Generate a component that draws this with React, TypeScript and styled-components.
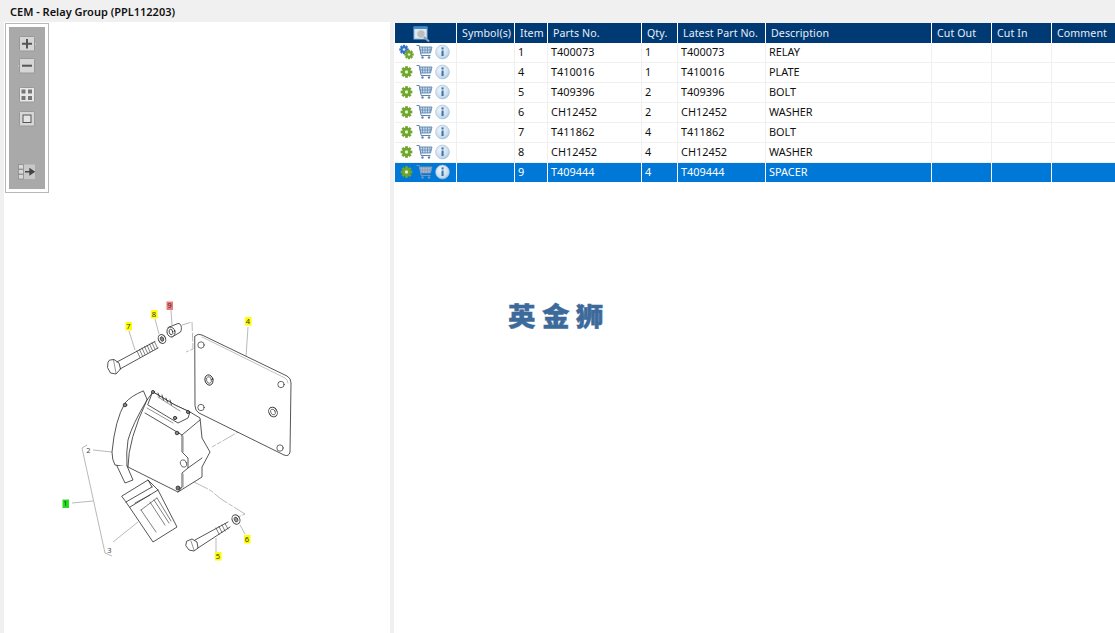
import React from "react";
import styled, { createGlobalStyle } from "styled-components";

const Global = createGlobalStyle`
  html, body { margin: 0; padding: 0; background: #fff; overflow: hidden; }
  #root { width: 1115px; height: 633px; }
`;

const Page = styled.div`
  width: 1115px;
  height: 633px;
  display: flex;
  flex-direction: column;
  background: #f0f0f0;
  font-family: "Noto Sans", "Open Sans", sans-serif;
  overflow: hidden;
`;
const TitleBar = styled.div`
  height: 22px;
  flex: none;
  padding-left: 10px;
  display: flex;
  align-items: center;
  font-size: 11px;
  font-weight: 600;
  color: #111;
`;
const Body = styled.div`
  flex: 1;
  display: flex;
  padding-left: 4px;
  gap: 4px;
  min-height: 0;
`;
const DiagramPane = styled.div`
  position: relative;
  width: 386px;
  flex: none;
  background: #fff;
`;
const Drawing = styled.svg`
  display: block;
  width: 386px;
  height: 611px;
`;
const Toolbar = styled.div`
  position: absolute;
  left: 1px;
  top: 1px;
  width: 44px;
  height: 170px;
  box-sizing: border-box;
  border: 1px solid #b8b8b8;
  padding: 3px;
  background: #fff;
`;
const ToolbarInner = styled.div`
  height: 100%;
  background: #a9a9a9;
  display: flex;
  flex-direction: column;
  align-items: center;
  padding-top: 9px;
  box-sizing: border-box;
`;
const ToolIcon = styled.svg<{ $top: number }>`
  display: block;
  width: 20px;
  height: 16px;
  margin-top: ${(p) => p.$top}px;
`;
const TablePane = styled.div`
  flex: 1;
  min-width: 0;
  background: #fff;
  margin-top: 1px;
  padding-left: 1px;
  display: flex;
  flex-direction: column;
`;
const Table = styled.table`
  width: 720px;
  table-layout: fixed;
  border-collapse: separate;
  border-spacing: 0;
  font-size: 10.9px;
`;
const Column = styled.col<{ $w: number }>`
  width: ${(p) => p.$w}px;
`;
const HeadCell = styled.th`
  height: 20px;
  padding: 0 0 0 5px;
  box-sizing: border-box;
  background: #003a75;
  color: #e8eef5;
  font-size: 10.6px;
  line-height: 14px;
  font-weight: 400;
  text-align: left;
  letter-spacing: 0.1px;
  border-right: 1px solid #fff;
  white-space: nowrap;
  overflow: hidden;
  vertical-align: middle;
  &:last-child { border-right: 0; }
`;
const Row = styled.tr<{ $selected?: boolean }>`
  background: ${(p) => (p.$selected ? "#0078d7" : "#fff")};
  color: ${(p) => (p.$selected ? "#fff" : "#111")};
`;
const Cell = styled.td<{ $selected?: boolean }>`
  height: 20px;
  padding: 0 0 2px 3px;
  box-sizing: border-box;
  line-height: 14px;
  border-right: 1px solid ${(p) => (p.$selected ? "#fff" : "#f0f0f0")};
  border-bottom: 1px solid ${(p) => (p.$selected ? "#fff" : "#f0f0f0")};
  white-space: nowrap;
  overflow: hidden;
  vertical-align: middle;
  &:last-child { border-right: 0; }
`;
const IconGroup = styled.div`
  display: flex;
  align-items: center;
  gap: 2px;
  padding-left: 1px;
  height: 16px;
  margin-bottom: -1px;
`;
const ViewSvg = styled.svg`
  display: block;
  margin: 1px 0 -2px 13px;
`;
const Watermark = styled.div`
  margin: 117px 0 0 113px;
  font-family: "Noto Sans CJK SC", sans-serif;
  font-weight: 900;
  font-size: 26px;
  line-height: 30px;
  letter-spacing: 6px;
  color: #3c6a9b;
  transform: scaleX(1.06);
  transform-origin: left center;
  -webkit-text-stroke: 0.4px #3c6a9b;
`;

function Gear({ x = 0, y = 0, r = 5, color = "#6fa52c" }: { x?: number; y?: number; r?: number; color?: string }) {
  const teeth = [0, 45, 90, 135, 180, 225, 270, 315];
  return (
    <g transform={`translate(${x} ${y})`}>
      {teeth.map((a) => (
        <rect key={a} x={-r * 0.27} y={-r * 1.12} width={r * 0.54} height={r * 0.6} fill={color} transform={`rotate(${a})`} />
      ))}
      <circle r={r * 0.78} fill={color} />
      <circle r={r * 0.32} fill="#e3efd0" />
    </g>
  );
}

function GearIcon({ multi }: { multi?: boolean }) {
  return (
    <svg width="15" height="16" viewBox="0 0 15 16">
      {multi ? (
        <>
          <Gear x={5} y={5.5} r={4.2} color="#2f6fd0" />
          <Gear x={10} y={10.5} r={4.2} color="#6fa52c" />
        </>
      ) : (
        <Gear x={7.5} y={8} r={5.2} />
      )}
    </svg>
  );
}

function CartIcon({ selected }: { selected?: boolean }) {
  const c = selected ? "#7d95b5" : "#5f86b0";
  return (
    <svg width="17" height="16" viewBox="0 0 17 16" fill="none">
      <path d="M0.5 1.5H3.2L5.2 11.5H14.5" stroke={c} strokeWidth="1" />
      <path d="M3.6 3H16L14.5 9H4.8Z" fill={selected ? "#a9bcd3" : "#c3d5e8"} stroke={c} strokeWidth="0.9" />
      <path d="M6.5 3V9M9 3V9M11.5 3V9M14 3V9M4.2 6H15.2" stroke={c} strokeWidth="0.7" />
      <circle cx="6.5" cy="13.5" r="1.2" fill={c} />
      <circle cx="13" cy="13.5" r="1.2" fill={c} />
    </svg>
  );
}

function InfoIcon() {
  return (
    <svg width="15" height="16" viewBox="0 0 15 16">
      <defs>
        <radialGradient id="infoBall" cx="0.4" cy="0.35" r="0.75">
          <stop offset="0" stopColor="#f2f7fc" />
          <stop offset="0.7" stopColor="#c9dced" />
          <stop offset="1" stopColor="#8fb3d4" />
        </radialGradient>
      </defs>
      <circle cx="7.5" cy="8" r="6.9" fill="url(#infoBall)" stroke="#9dbcd8" strokeWidth="0.6" />
      <rect x="6.5" y="3.4" width="2.1" height="2.1" fill="#3f73a8" />
      <rect x="6.5" y="6.5" width="2.1" height="5.5" fill="#3f73a8" />
    </svg>
  );
}

function ViewIcon() {
  return (
    <ViewSvg width="18" height="17" viewBox="0 0 18 17">
      <rect x="1" y="1" width="13" height="12" fill="#dfe8f2" stroke="#7fb2dc" />
      <rect x="1" y="1" width="13" height="2" fill="#3f8fd0" />
      <circle cx="8" cy="8" r="4.2" fill="#bdbdbd" stroke="#e6e6e6" />
      <path d="M11 11L16 15.5" stroke="#8aa0b5" strokeWidth="2.2" />
    </ViewSvg>
  );
}

const btnFill = "#d6d6d6";

function Labels() {
  const labels: [number, number, string, string][] = [
    [128.5, 326, "7", "#ffff00"],
    [154, 314, "8", "#ffff00"],
    [169.5, 305.5, "9", "#f07a7a"],
    [248, 321, "4", "#ffff00"],
    [247, 539, "6", "#ffff00"],
    [218, 556, "5", "#ffff00"],
    [65.5, 503.5, "1", "#22e022"],
  ];
  return (
    <>
      {labels.map(([x, y, t, bg]) => (
        <g key={t}>
          <rect x={x - 3} y={y - 4} width="6.5" height="8.5" fill={bg} />
          <text x={x} y={y + 2.7} fontSize="7.5" textAnchor="middle" fill="#333" fontFamily="Noto Sans, sans-serif">{t}</text>
        </g>
      ))}
      <text x={88.5} y={453} fontSize="7.5" textAnchor="middle" fill="#444" fontFamily="Noto Sans, sans-serif">2</text>
      <text x={109.5} y={552.5} fontSize="7.5" textAnchor="middle" fill="#444" fontFamily="Noto Sans, sans-serif">3</text>
    </>
  );
}

function PartsDrawing() {
  return (
    <Drawing viewBox="4 22 386 611">
      {/* leaders */}
      <g fill="none" stroke="#8a8a8a" strokeWidth="0.6">
        <path d="M129 331L135 350M155 319L159 334M171 310L172 325M248 327L246 357" />
        <path d="M87 445L82 448L105 553L112 556" />
        <path d="M72 503L93 501M93 450L112 452M113 542L138 522" />
        <path d="M216 538L216 552M240 525L245 534" />
        <path d="M182 325L192 322L193 349L186 352" strokeDasharray="9 1.5" />
        <path d="M273 412L212 447" strokeDasharray="14 1.5 5 1.5" />
        <path d="M172 471L210 490L221 499L245 514L238 517" strokeDasharray="16 1.5 5 1.5" />
        <path d="M172 471L184 464" />
      </g>
      <g fill="none" stroke="#2a2a2a" strokeWidth="0.8" strokeLinejoin="round" strokeLinecap="round">
        {/* bolt 7 */}
        <path d="M110 360L114 359.5L119 363L120.5 369L116 374L110.5 373L107.5 367.5L108 362.5Z" fill="#fff" />
        <path d="M113.5 360L116 373" strokeWidth="0.5" />
        <path d="M117 362L155 341.5M120 369L158 348" />
        <path d="M137 351L140 357.5M139.5 349.5L142.5 356M142 348L145 354.5M144.5 346.5L147.5 353M147 345.2L150 351.8M149.5 344L152.5 350.5M152 342.8L155 349.2M154.5 341.8L157.5 348" strokeWidth="0.6" />
        {/* washer 8 */}
        <ellipse cx="162" cy="339" rx="3.6" ry="4.6" transform="rotate(-25 162 339)" stroke="#444" strokeWidth="1" />
        <ellipse cx="162" cy="339" rx="1.6" ry="2.4" transform="rotate(-25 162 339)" fill="#888" stroke="#444" />
        {/* spacer 9 */}
        <path d="M168 327.5L178 323.5C181 323 182.5 328 180.5 332L172 337" fill="#fff" />
        <ellipse cx="171" cy="332" rx="4" ry="5" transform="rotate(-15 171 332)" fill="#fff" />
        <ellipse cx="171" cy="332" rx="1.8" ry="2.8" transform="rotate(-15 171 332)" />
        {/* plate 4 */}
        <path d="M195 336Q198 333 202 335L287 376Q291 378 291 383L290 452Q289 457 284 455L199 413Q195 411 195 406Z" fill="#fff" />
        <path d="M202 337L285 378Q288 380 288 383" strokeWidth="0.45" stroke="#777" />
        <circle cx="201" cy="345" r="3.2" strokeWidth="0.7" />
        <circle cx="281" cy="384.5" r="3.2" strokeWidth="0.7" />
        <circle cx="201" cy="407.5" r="3.2" strokeWidth="0.7" />
        <circle cx="280" cy="448" r="3.2" strokeWidth="0.7" />
        <ellipse cx="209" cy="380" rx="4" ry="5.2" transform="rotate(-15 209 380)" strokeWidth="0.9" />
        <ellipse cx="209" cy="380" rx="2.4" ry="3.4" transform="rotate(-15 209 380)" fill="#fff" strokeWidth="0.6" />
        <ellipse cx="273" cy="412" rx="4" ry="5" transform="rotate(-30 273 412)" strokeWidth="0.9" />
        <ellipse cx="273" cy="412" rx="2.2" ry="3" transform="rotate(-30 273 412)" fill="#fff" strokeWidth="0.6" />

        {/* cable */}
        <path d="M143 391Q131 396 125 403Q115 420 112 452Q112 460 115 465L127 467Q126 452 128 440Q132 425 147 400Z" fill="#fff" />
        <path d="M117 466L125 483L133 480L127 466" fill="#fff" />
        {/* relay body */}
        <path d="M147 400L153 392L175 405L190 412L200 418L202 438L210 452L202 467L202 477L178 492L128 467Q128 440 147 400Z" fill="#fff" />
        <path d="M145 413L177 432L182 435L182 452L188 458L188 468L182 473L182 487L178 492" />
        <path d="M182 435L200 420M188 468L202 458" />
        <path d="M147 408L173 423" strokeWidth="0.5" />
        <path d="M183 436L183 452" stroke="#999" strokeWidth="1.2" />
        <path d="M183 474L183 487" stroke="#999" strokeWidth="1.2" />
        <path d="M153 392L175 405L190 412L188 418L178 423L148 405Z" fill="#fff" />
        <path d="M158 397L180 411" strokeWidth="0.5" />
        <path d="M158 393L159.5 397M162 395L163.5 400M166 398L167.5 402M170 400L171.5 405" strokeWidth="0.8" />
        <circle cx="125" cy="405" r="1.8" fill="#888" />
        <circle cx="153" cy="392" r="1.6" fill="#888" />
        <circle cx="177" cy="433" r="1.8" fill="#888" />
        <circle cx="175" cy="418" r="1.7" fill="#888" />
        <circle cx="188" cy="412" r="1.6" fill="#888" />
        <circle cx="178" cy="488" r="2" fill="#777" />
        <ellipse cx="183.5" cy="463.5" rx="3" ry="3.8" transform="rotate(-20 183.5 463.5)" fill="#fff" stroke="#555" />

        {/* connector 3 */}
        <path d="M122 496L148 480L158 490L177 527L153 542L126 502Z" fill="#fff" />
        <path d="M126 502L152 487M152 487L148 480M130 507L158 490" />
        <path d="M135 503L150 495M141 510L157 498M141 510L156 532M150 502L165 525M154 500L169 523M157 498L171 521" strokeWidth="0.6" />
        {/* bolt 5 */}
        <path d="M187 541L192 539L197 542L198 548L194 551L189 550L186 546Z" fill="#fff" />
        <path d="M191 541L194 550" strokeWidth="0.5" />
        <path d="M195 540L228 522M198 548L230 527" />
        <path d="M216 528L219 534M219 526.5L222 532.5M222 525L225 531M225 523.5L228 529" strokeWidth="0.6" />
        {/* washer 6 */}
        <ellipse cx="236" cy="519.5" rx="3.8" ry="4.8" transform="rotate(-25 236 519.5)" stroke="#444" strokeWidth="1" />
        <ellipse cx="236" cy="519.5" rx="1.7" ry="2.5" transform="rotate(-25 236 519.5)" fill="#999" stroke="#444" />
      </g>
      <Labels />
    </Drawing>
  );
}

function ToolbarIcons() {
  const stroke = "#999";
  return (
    <ToolbarInner>
      <ToolIcon $top={0} viewBox="0 0 20 16">
        <path d="M17 6.5L19 8L17 9.5Z" fill="#ececec" />
        <rect x="2.5" y="0.5" width="15" height="14.5" rx="1" fill={btnFill} stroke={stroke} />
        <path d="M5 7.7H15M10 3V12.5" stroke="#555" strokeWidth="2" />
      </ToolIcon>
      <ToolIcon $top={6} viewBox="0 0 20 16">
        <path d="M3 6.5L1 8L3 9.5Z" fill="#ececec" />
        <rect x="2.5" y="0.5" width="15" height="14.5" rx="1" fill={btnFill} stroke={stroke} />
        <path d="M5 7.7H15" stroke="#555" strokeWidth="2" />
      </ToolIcon>
      <ToolIcon $top={13} viewBox="0 0 20 16">
        <rect x="2.5" y="0.5" width="15" height="14.5" rx="1" fill="#e8e8e8" stroke={stroke} />
        <path d="M4.5 2.5h4v4h-4zM11 2.5h4v4h-4zM4.5 9h4v4h-4zM11 9h4v4h-4z" fill="#777" />
      </ToolIcon>
      <ToolIcon $top={8} viewBox="0 0 20 16">
        <rect x="2.5" y="0.5" width="15" height="14.5" rx="1" fill={btnFill} stroke={stroke} />
        <rect x="6" y="4" width="8" height="7.5" fill="#e4e4e4" stroke="#555" />
      </ToolIcon>
      <ToolIcon $top={37} viewBox="0 0 20 16">
        <rect x="1.5" y="0.5" width="5" height="4.5" fill="#d8d8d8" stroke="#888" strokeWidth="0.7" />
        <rect x="1.5" y="5.5" width="5" height="4.5" fill="#d8d8d8" stroke="#888" strokeWidth="0.7" />
        <rect x="1.5" y="10.5" width="5" height="4.5" fill="#d8d8d8" stroke="#888" strokeWidth="0.7" />
        <rect x="7" y="0.5" width="11" height="14.5" fill="#c8c8c8" />
        <path d="M8 7.7H14.5M13 5L17 7.7L13 10.5Z" stroke="#444" strokeWidth="1.4" fill="#444" />
      </ToolIcon>
    </ToolbarInner>
  );
}

const widths = [62, 58, 33, 94, 36, 88, 166, 60, 60, 63];
const headers = ["Symbol(s)", "Item", "Parts No.", "Qty.", "Latest Part No.", "Description", "Cut Out", "Cut In", "Comment"];
const rows: [string, string, string, string, string][] = [
  ["1", "T400073", "1", "T400073", "RELAY"],
  ["4", "T410016", "1", "T410016", "PLATE"],
  ["5", "T409396", "2", "T409396", "BOLT"],
  ["6", "CH12452", "2", "CH12452", "WASHER"],
  ["7", "T411862", "4", "T411862", "BOLT"],
  ["8", "CH12452", "4", "CH12452", "WASHER"],
  ["9", "T409444", "4", "T409444", "SPACER"],
];

export default function App() {
  return (
    <Page>
      <Global />
      <TitleBar>CEM - Relay Group (PPL112203)</TitleBar>
      <Body>
        <DiagramPane>
          <PartsDrawing />
          <Toolbar>
            <ToolbarIcons />
          </Toolbar>
        </DiagramPane>
        <TablePane>
          <Table>
            <colgroup>
              {widths.map((w, i) => (
                <Column key={i} $w={w} />
              ))}
            </colgroup>
            <thead>
              <tr>
                <HeadCell>
                  <ViewIcon />
                </HeadCell>
                {headers.map((h) => (
                  <HeadCell key={h}>{h}</HeadCell>
                ))}
              </tr>
            </thead>
            <tbody>
              {rows.map((r, i) => {
                const sel = i === rows.length - 1;
                return (
                  <Row key={r[0]} $selected={sel}>
                    <Cell $selected={sel}>
                      <IconGroup>
                        <GearIcon multi={i === 0} />
                        <CartIcon selected={sel} />
                        <InfoIcon />
                      </IconGroup>
                    </Cell>
                    <Cell $selected={sel} />
                    {r.map((v, j) => (
                      <Cell key={j} $selected={sel}>{v}</Cell>
                    ))}
                    <Cell $selected={sel} />
                    <Cell $selected={sel} />
                    <Cell $selected={sel} />
                  </Row>
                );
              })}
            </tbody>
          </Table>
          <Watermark>英金狮</Watermark>
        </TablePane>
      </Body>
    </Page>
  );
}
